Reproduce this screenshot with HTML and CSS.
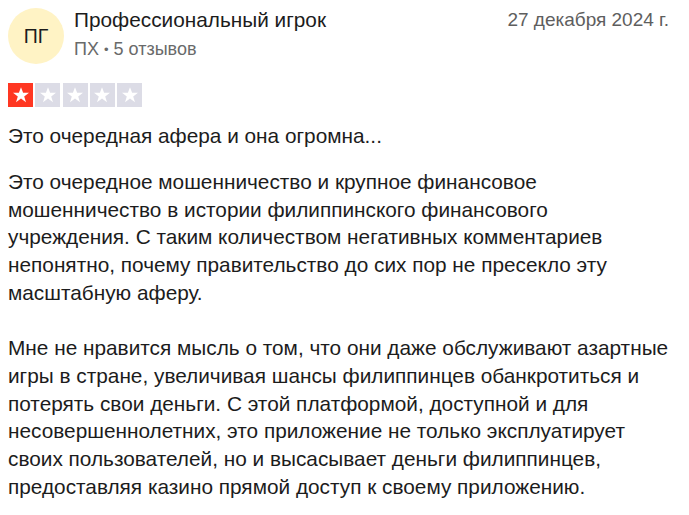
FILE: index.html
```html
<!DOCTYPE html>
<html lang="ru">
<head>
<meta charset="utf-8">
<link rel="stylesheet" href="styles.css">
</head>
<body>
<article class="review">
  <header class="head">
    <div class="avatar">ПГ</div>
    <div class="who">
      <div class="name">Профессиональный игрок</div>
      <div class="meta">ПХ <span class="dot">•</span> 5 отзывов</div>
    </div>
    <time class="date">27 декабря 2024 г.</time>
  </header>
  <div class="stars">
    <span class="star on"><svg viewBox="0 0 24 24"><path d="M12 4.2l2.1 5.6h5.9l-4.8 3.6 1.8 5.8L12 15.6l-5 3.6 1.8-5.8L4 9.8h5.9z"/></svg></span>
    <span class="star"><svg viewBox="0 0 24 24"><path d="M12 4.2l2.1 5.6h5.9l-4.8 3.6 1.8 5.8L12 15.6l-5 3.6 1.8-5.8L4 9.8h5.9z"/></svg></span>
    <span class="star"><svg viewBox="0 0 24 24"><path d="M12 4.2l2.1 5.6h5.9l-4.8 3.6 1.8 5.8L12 15.6l-5 3.6 1.8-5.8L4 9.8h5.9z"/></svg></span>
    <span class="star"><svg viewBox="0 0 24 24"><path d="M12 4.2l2.1 5.6h5.9l-4.8 3.6 1.8 5.8L12 15.6l-5 3.6 1.8-5.8L4 9.8h5.9z"/></svg></span>
    <span class="star"><svg viewBox="0 0 24 24"><path d="M12 4.2l2.1 5.6h5.9l-4.8 3.6 1.8 5.8L12 15.6l-5 3.6 1.8-5.8L4 9.8h5.9z"/></svg></span>
  </div>
  <h2 class="title">Это очередная афера и она огромна...</h2>
  <p class="text">Это очередное мошенничество и крупное финансовое мошенничество в истории филиппинского финансового учреждения. С таким количеством негативных комментариев непонятно, почему правительство до сих пор не пресекло эту масштабную аферу.<br><br>Мне не нравится мысль о том, что они даже обслуживают азартные игры в стране, увеличивая шансы филиппинцев обанкротиться и потерять свои деньги. С этой платформой, доступной и для несовершеннолетних, это приложение не только эксплуатирует своих пользователей, но и высасывает деньги филиппинцев, предоставляя казино прямой доступ к своему приложению.</p>
</article>
</body>
</html>
```

FILE: styles.css
```css
html, body {
  margin: 0;
  background: #ffffff;
}
body {
  font-family: "Liberation Sans", Arial, sans-serif;
  color: #1c1c1c;
}
.review {
  padding: 8px 18px 0 8px;
}
.head {
  display: flex;
  align-items: flex-start;
}
.avatar {
  width: 56px;
  height: 56px;
  border-radius: 50%;
  background: #fff3c5;
  display: flex;
  align-items: center;
  justify-content: center;
  font-size: 19.5px;
  color: #1c1c1c;
  flex: none;
}
.who {
  margin-left: 10px;
  flex: 1;
}
.name {
  font-size: 20.8px;
  line-height: 24px;
}
.meta {
  font-size: 18px;
  line-height: 22px;
  margin-top: 6px;
  color: #696a6a;
}
.dot {
  font-size: 13px;
  position: relative;
  top: -1px;
}
.date {
  font-size: 19px;
  line-height: 23px;
  margin-right: 2px;
  color: #5e5e5e;
}
.stars {
  display: flex;
  gap: 2.3px;
  margin-top: 19px;
}
.star {
  width: 25px;
  height: 24px;
  background: #dcdce6;
  display: flex;
  align-items: center;
  justify-content: center;
}
.star.on {
  background: #ff3722;
}
.star svg {
  width: 24px;
  height: 24px;
  fill: #ffffff;
}
.title {
  font-size: 20.8px;
  font-weight: normal;
  line-height: 27.7px;
  margin: 15px 0 0;
}
.text {
  font-size: 20.8px;
  line-height: 27.7px;
  margin: 18.3px 0 0;
}
```
